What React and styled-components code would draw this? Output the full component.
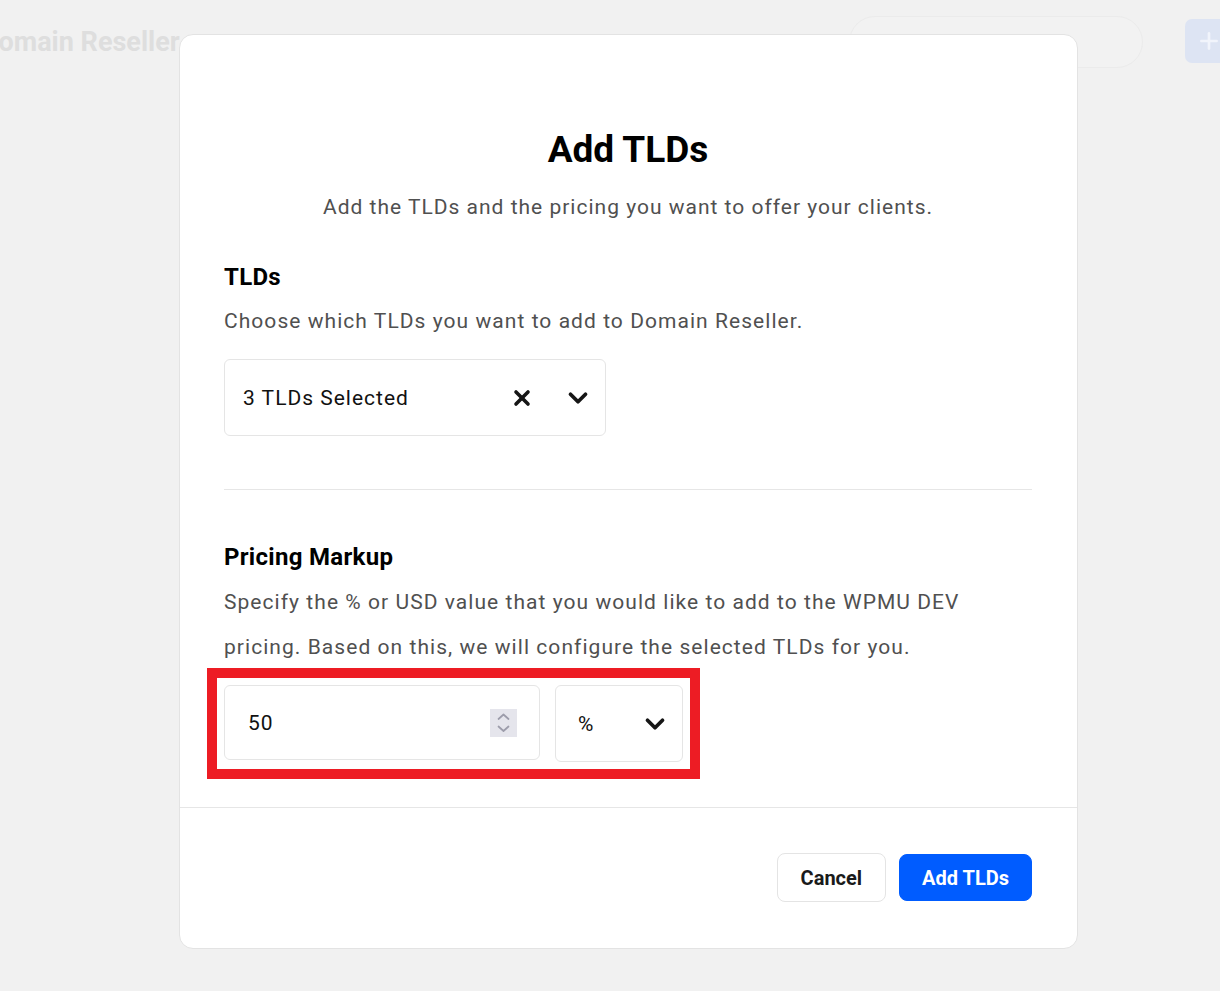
import React, { useState } from "react";
import styled, { createGlobalStyle } from "styled-components";
import { X, ChevronDown, Plus } from "lucide-react";

const GlobalStyle = createGlobalStyle`
  html, body {
    margin: 0;
    padding: 0;
    background: #f1f1f1;
  }
  body {
    font-family: Roboto, "Liberation Sans", Arial, sans-serif;
    color: #111;
  }
  * { box-sizing: border-box; }
`

const Page = styled.div`
  position: relative;
  width: 1220px;
  height: 991px;
  overflow: hidden;
  background: #f1f1f1;
`

// what lies behind the modal, faded by the overlay
const TopBar = styled.div`
  display: flex;
  align-items: flex-start;
  height: 84px;
  padding-top: 16px;
`

const PageTitle = styled.h1`
  margin: 10px 0 0 -19px;
  font-size: 27px;
  font-weight: 700;
  color: #dedede;
  line-height: 1.2;
  flex: 1;
`

const SearchPill = styled.div`
  width: 294px;
  height: 52px;
  border: 1px solid #ebebeb;
  border-radius: 26px;
  background: #f2f2f2;
`

const GhostButton = styled.div`
  display: flex;
  align-items: center;
  justify-content: center;
  width: 48px;
  height: 44px;
  margin: 3px -13px 0 42px;
  border-radius: 7px;
  background: #dde4f3;
  color: #f1f4fb;
`

const Modal = styled.div`
  position: absolute;
  left: 179px;
  top: 34px;
  width: 899px;
  background: #fff;
  border: 1px solid #e3e3e3;
  border-radius: 14px;
`

const Body = styled.div`
  padding: 93px 45px 45px 44px;
`

const Title = styled.h2`
  margin: 0;
  text-align: center;
  font-size: 37px;
  line-height: 43px;
  font-weight: 700;
  color: #000;
`

const Subtitle = styled.p`
  margin: 21px 0 0;
  text-align: center;
  font-size: 21px;
  line-height: 30px;
  letter-spacing: 1px;
  color: #505050;
`

const SectionTitle = styled.h3`
  margin: ${p => p.$top || 0}px 0 0;
  font-size: 24px;
  line-height: 31px;
  font-weight: 700;
  letter-spacing: 0.3px;
  color: #000;
`

const Help = styled.p`
  margin: ${p => p.$top || 7}px 0 0;
  font-size: 21px;
  line-height: ${p => p.$lh || 30}px;
  letter-spacing: 1.05px;
  color: #505050;
`

const Select = styled.div`
  display: flex;
  align-items: center;
  width: ${p => p.$w}px;
  height: ${p => p.$h || 77}px;
  margin-top: ${p => p.$top || 0}px;
  padding: 0 12px 0 ${p => p.$pl || 18}px;
  border: 1px solid #e5e5e5;
  border-radius: 6px;
  background: #fff;
  font-size: 21px;
  letter-spacing: 1px;
  color: #111;
`

const SelectValue = styled.span`
  flex: 1;
`

const IconSlot = styled.span`
  display: flex;
  align-items: center;
  justify-content: center;
  color: #161616;
  margin-left: ${p => p.$ml || 0}px;
`

const Divider = styled.hr`
  margin: 53px 0 0;
  border: 0;
  border-top: 1px solid #e6e6e6;
`

const InputRow = styled.div`
  display: flex;
  align-items: flex-start;
  gap: 15px;
  width: max-content;
  margin-top: 15px;
  outline: 10px solid #ed1c24;
  outline-offset: 7px;
`

const NumberBox = styled.div`
  display: flex;
  align-items: center;
  width: 316px;
  height: 75px;
  padding: 0 22px 0 23px;
  border: 1px solid #e5e5e5;
  border-radius: 6px;
  font-size: 21px;
  letter-spacing: 1px;
  color: #111;
`

const NumberInput = styled.input`
  flex: 1;
  min-width: 0;
  border: 0;
  outline: none;
  font: inherit;
  letter-spacing: inherit;
  color: inherit;
  background: transparent;
  padding: 0;
  -moz-appearance: textfield;
  &::-webkit-inner-spin-button,
  &::-webkit-outer-spin-button {
    -webkit-appearance: none;
    margin: 0;
  }
`

const Spinner = styled.div`
  display: flex;
  width: 27px;
  height: 28px;
  background: #e5e5ec;
  line-height: 0;
`

const Footer = styled.div`
  display: flex;
  justify-content: flex-end;
  gap: 13px;
  padding: 45px 45px 46px;
  border-top: 1px solid #e6e6e6;
`

const Button = styled.button`
  height: ${p => (p.$primary ? 47 : 49)}px;
  margin-top: ${p => (p.$primary ? 1 : 0)}px;
  padding: 0 ${p => (p.$primary ? 22 : 23)}px;
  border: 1px solid ${p => (p.$primary ? '#005cff' : '#e4e4e4')};
  border-radius: 8px;
  background: ${p => (p.$primary ? '#005cff' : '#fff')};
  color: ${p => (p.$primary ? '#fff' : '#1a1a1a')};
  font-family: inherit;
  font-size: 20px;
  font-weight: 700;
  cursor: pointer;
`

const SpinIcon = () => (
  <svg width="27" height="28" viewBox="0 0 27 28" fill="none"
    stroke="#9d9dab" strokeWidth="1.7" strokeLinecap="round" strokeLinejoin="round">
    <path d="M8.5 10 L13.5 5.5 L18.5 10" />
    <path d="M8.5 17.5 L13.5 22 L18.5 17.5" />
  </svg>
)

export default function App() {
  const [markup, setMarkup] = useState(50)

  return (
    <Page>
      <GlobalStyle />
      <TopBar>
        <PageTitle>Domain Reseller</PageTitle>
        <SearchPill />
        <GhostButton>
          <Plus size={26} strokeWidth={2.5} />
        </GhostButton>
      </TopBar>

      <Modal>
        <Body>
          <Title>Add TLDs</Title>
          <Subtitle>Add the TLDs and the pricing you want to offer your clients.</Subtitle>

          <SectionTitle $top={40}>TLDs</SectionTitle>
          <Help $top={13}>Choose which TLDs you want to add to Domain Reseller.</Help>
          <Select $w={382} $top={23}>
            <SelectValue>3 TLDs Selected</SelectValue>
            <IconSlot>
              <X size={24} strokeWidth={3.6} />
            </IconSlot>
            <IconSlot $ml={29}>
              <ChevronDown size={30} strokeWidth={3} />
            </IconSlot>
          </Select>

          <Divider />

          <SectionTitle $top={52}>Pricing Markup</SectionTitle>
          <Help $lh={45}>
            Specify the % or USD value that you would like to add to the WPMU DEV
            pricing. Based on this, we will configure the selected TLDs for you.
          </Help>

          <InputRow>
            <NumberBox>
              <NumberInput
                type="number"
                value={markup}
                onChange={e => setMarkup(e.target.value)}
              />
              <Spinner>
                <SpinIcon />
              </Spinner>
            </NumberBox>
            <Select $w={128} $pl={22}>
              <SelectValue>%</SelectValue>
              <IconSlot>
                <ChevronDown size={30} strokeWidth={3} />
              </IconSlot>
            </Select>
          </InputRow>
        </Body>

        <Footer>
          <Button>Cancel</Button>
          <Button $primary>Add TLDs</Button>
        </Footer>
      </Modal>
    </Page>
  )
}
